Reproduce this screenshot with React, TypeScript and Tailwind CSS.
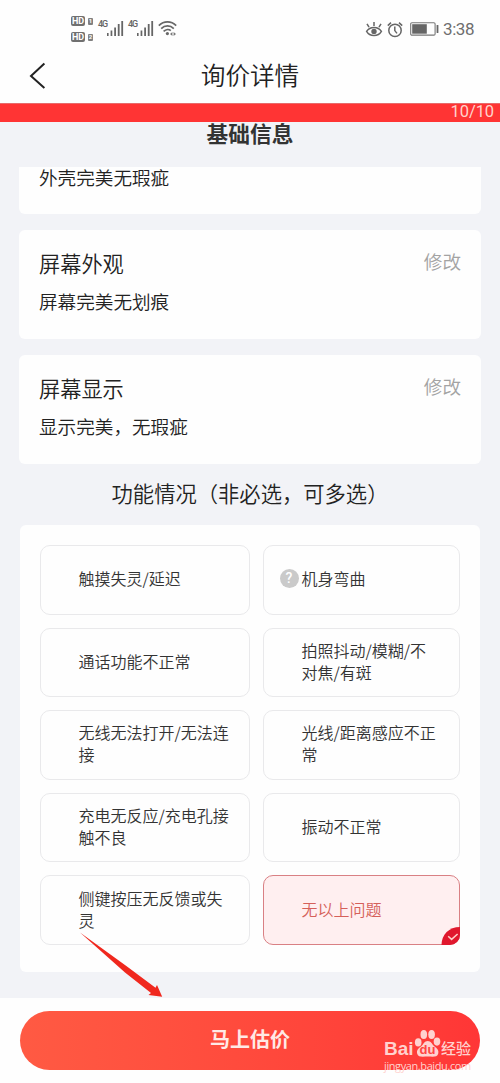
import clsx from "clsx";

type Answer = {
  title: string;
  value: string;
};

type Option = {
  label: string;
  help?: boolean;
  selected?: boolean;
};

const ANSWERS: Answer[] = [
  { title: "屏幕外观", value: "屏幕完美无划痕" },
  { title: "屏幕显示", value: "显示完美，无瑕疵" },
];

const OPTIONS: Option[] = [
  { label: "触摸失灵/延迟" },
  { label: "机身弯曲", help: true },
  { label: "通话功能不正常" },
  { label: "拍照抖动/模糊/不对焦/有斑" },
  { label: "无线无法打开/无法连接" },
  { label: "光线/距离感应不正常" },
  { label: "充电无反应/充电孔接触不良" },
  { label: "振动不正常" },
  { label: "侧键按压无反馈或失灵" },
  { label: "无以上问题", selected: true },
];

const HdBadge = ({ sim }: { sim: number }) => (
  <div className="flex h-[10px] items-center gap-[3px]">
    <span className="flex h-[10px] w-[14px] items-center justify-center rounded-[2px] bg-[#707070] text-[9px] leading-none font-bold text-white">
      HD
    </span>
    <span className="flex h-[7px] w-[5px] items-center justify-center rounded-[1px] bg-[#808080] text-[6px] leading-none font-bold text-white">
      {sim}
    </span>
  </div>
);

const Signal = () => (
  <div className="flex h-[17px] items-start">
    <span className="w-[9px] text-[9px] leading-[9px] font-medium tracking-[-1.2px] text-[#666]">4G</span>
    <svg className="h-[17px] w-[17px]" viewBox="0 0 17 17" fill="#666">
      <rect x="0" y="13" width="1.6" height="3" />
      <rect x="3.6" y="10.5" width="1.7" height="5.5" />
      <rect x="7.2" y="7.5" width="1.8" height="8.5" />
      <rect x="10.8" y="4" width="1.8" height="12" />
      <rect x="14.3" y="1" width="1.8" height="15" />
    </svg>
  </div>
);

const WifiIcon = () => (
  <svg className="h-[17px] w-[19px]" viewBox="0 0 19 17" fill="none" stroke="#686868" strokeWidth="1.7">
    <path d="M0.8 5.6C5.8 0.7 13.2 0.7 18.2 5.6" />
    <path d="M3.2 8.6C6.8 5 12.2 5 15.8 8.6" />
    <path d="M5.6 11.4C8 9 11 9 12.8 10.6" />
    <circle cx="9.4" cy="13.6" r="1.6" fill="#686868" stroke="none" />
    <path d="M12 14l2.4-2v4zM18 14l-2.4-2v4z" fill="#777" stroke="none" />
  </svg>
);

const StatusBar = () => (
  <div className="flex h-12 shrink-0 items-start pt-[16px] pr-[26px] pl-[71px] font-['Roboto',sans-serif]">
    <div className="flex flex-col gap-[6px]">
      <HdBadge sim={1} />
      <HdBadge sim={2} />
    </div>
    <div className="ml-[5px] flex gap-[4px] pt-[4px]">
      <Signal />
      <Signal />
    </div>
    <div className="ml-[4px] pt-[4px]">
      <WifiIcon />
    </div>
    <div className="-mt-px ml-auto flex h-[28px] items-center">
      <svg className="h-[17px] w-[18px]" viewBox="0 0 18 17" fill="none" stroke="#666" strokeWidth="1.5">
        <path d="M1.6 10.4C4.8 5.2 13.2 5.2 16.4 10.4C13.2 16 4.8 16 1.6 10.4Z" />
        <circle cx="9" cy="10.4" r="2.7" fill="#666" stroke="none" />
        <path d="M9 1v4M2 2.8l2 3.4M16 2.8l-2 3.4" />
      </svg>
      <svg className="ml-[4px] h-[17px] w-[16px]" viewBox="0 0 16 17" fill="none" stroke="#666" strokeWidth="1.5">
        <circle cx="8" cy="9.4" r="6.2" />
        <path d="M7.8 5.4v4.2l2.2 2.8M0.8 4.6L4 1.6M15.2 4.6L12 1.6" />
      </svg>
      <svg className="ml-[7px] h-[14px] w-[29px]" viewBox="0 0 29 14">
        <rect x="0.7" y="0.7" width="24.4" height="12.4" rx="1.2" fill="none" stroke="#777" strokeWidth="1.1" />
        <rect x="2.2" y="2.2" width="14.6" height="9.5" fill="#666" />
        <rect x="26.6" y="3" width="1.8" height="8" rx="0.6" fill="#666" />
      </svg>
      <span className="ml-[4px] w-[31px] text-[17px] leading-[20px] tracking-[-0.4px] whitespace-nowrap text-[#6e6e6e]">3:38</span>
    </div>
  </div>
);

const OptionButton = ({ option }: { option: Option }) => (
  <button
    type="button"
    className={clsx(
      "relative flex h-[69.5px] items-center rounded-[10px] border pr-[18px] pb-[3px] text-left text-[16px] leading-[22px] font-[350]",
      option.selected
        ? "border-[#d98084] bg-[#ffeff0] text-[#d5605a]"
        : "border-[#e9e9eb] bg-[#fefefe] text-[#333]",
    )}
  >
    <span className="flex w-[37.5px] shrink-0 justify-end pr-[3px]">
      {option.help && (
        <span className="flex size-[19px] items-center justify-center rounded-full bg-[#cacaca] font-['Roboto',sans-serif] text-[14px] leading-none font-medium text-white">
          ?
        </span>
      )}
    </span>
    <span>{option.label}</span>
    {option.selected && (
      <svg className="absolute -right-px -bottom-px h-[19px] w-[19px]" viewBox="0 0 19 19">
        <path d="M0.5 19C0.5 8.5 8 1 19 1V9A10 10 0 0 1 9 19Z" fill="#e0182d" />
        <path d="M7.2 10.2l3.4 3.2 6-5.4" fill="none" stroke="#ffd0c8" strokeWidth="1.5" />
      </svg>
    )}
  </button>
);

const Arrow = () => (
  <svg className="pointer-events-none absolute top-[932px] left-[79px] h-[66px] w-[84px]" viewBox="0 0 84 66" fill="#f0281e">
    <path d="M1 0.5L47 33.8L76.5 55.8L78 53L83.2 64.8L69.5 63L72 61L46 40.5Z" />
  </svg>
);

const Watermark = () => (
  <div className="pointer-events-none absolute top-[1029px] left-[384px] w-[112px] text-[#ffd2cf]">
    <div className="flex h-[30px] items-end">
      <span className="w-[30px] font-['Liberation_Sans',sans-serif] text-[19px] leading-[20px] font-bold">Bai</span>
      <div className="relative h-[30px] w-[27px]">
        <svg className="h-[29px] w-[27px]" viewBox="0 0 27 29" fill="currentColor">
          <ellipse cx="4.2" cy="13.4" rx="3.3" ry="4.1" />
          <ellipse cx="9.8" cy="5.4" rx="3.3" ry="4.5" />
          <ellipse cx="17.6" cy="5.4" rx="3.3" ry="4.5" />
          <ellipse cx="23" cy="12.6" rx="3.3" ry="4.1" />
          <path d="M13.7 12C10.5 12 9.5 15 7.5 17C4 19.8 2.4 21 3.2 24.8C4.2 28.8 9.5 27.6 13.7 27.6C18 27.6 23.2 28.8 24.2 24.8C25 21 23.4 19.8 20 17C18 15 17 12 13.7 12Z" />
        </svg>
        <span className="absolute inset-x-0 top-[14px] text-center font-['Liberation_Sans',sans-serif] text-[13px] leading-[14px] font-bold text-[#ff4542]">
          du
        </span>
      </div>
      <span className="text-[15px] leading-[23px] font-medium">经验</span>
    </div>
    <div className="font-['Open_Sans',sans-serif] text-[11px] leading-[13px] font-medium tracking-[-0.4px] whitespace-nowrap">
      jingyan.baidu.com
    </div>
  </div>
);

export default function App() {
  return (
    <div className="relative flex h-[1083px] w-[500px] flex-col overflow-hidden bg-[#fefefe] font-['Noto_Sans_CJK_SC',sans-serif] text-[#222]">
      <StatusBar />

      <header className="flex h-[55px] shrink-0 items-center">
        <svg className="ml-[29px] h-[27px] w-[17px]" viewBox="0 0 17 27" fill="none" stroke="#222" strokeWidth="2">
          <path d="M15.4 1.5L2 14L15.4 26" />
        </svg>
        <h1 className="flex-1 pr-[46px] pb-[3px] text-center text-[24.6px] leading-[36px] font-[350]">询价详情</h1>
      </header>

      <div className="flex h-[19px] shrink-0 items-center justify-end border-t border-[#e86a6a] bg-[#ff3434] pr-[6px] pb-[2px] font-['Roboto',sans-serif] text-[16.5px] leading-[16px] tracking-[-0.1px] text-[#ffd3cc]">
        10/10
      </div>

      <main className="flex min-h-0 flex-1 flex-col bg-[#f2f3f7]">
        <h2 className="h-[45px] shrink-0 text-center text-[21.7px] leading-[22px] font-bold text-[#333]">基础信息</h2>

        <div className="mx-[19px] h-[47px] shrink-0 rounded-b-md bg-[#fefefe] px-5">
          <p className="text-[18.6px] leading-[19px] font-[350]">外壳完美无瑕疵</p>
        </div>

        {ANSWERS.map((answer) => (
          <section key={answer.title} className="mx-[19px] mt-4 h-[109px] shrink-0 rounded-md bg-[#fefefe] px-5 pt-[17px] font-[350]">
            <div className="flex items-start justify-between">
              <h3 className="text-[21.2px] leading-[32px]">{answer.title}</h3>
              <button type="button" className="text-[18.6px] leading-[28px] text-[#a3a3a3]">
                修改
              </button>
            </div>
            <p className="mt-2 text-[18.6px] leading-[28px]">{answer.value}</p>
          </section>
        ))}

        <h3 className="h-[61px] shrink-0 text-center text-[21.3px] leading-[58px] font-[350] whitespace-nowrap">
          功能情况（非必选，可多选）
        </h3>

        <div className="mx-5 grid h-[447px] shrink-0 grid-cols-[210px_197px] content-start gap-x-[13px] gap-y-[13.1px] rounded-md bg-[#fefefe] px-5 pt-5">
          {OPTIONS.map((option) => (
            <OptionButton key={option.label} option={option} />
          ))}
        </div>
      </main>

      <footer className="h-[85px] shrink-0 bg-[#fefefe] px-5 pt-[13px]">
        <button
          type="button"
          className="h-[59px] w-full rounded-full bg-linear-to-r from-[#ff5a43] to-[#ff3636] pb-[3px] text-[20px] leading-[56px] font-bold text-[#ffe9e6]"
        >
          马上估价
        </button>
      </footer>

      <Arrow />
      <Watermark />
    </div>
  );
}
